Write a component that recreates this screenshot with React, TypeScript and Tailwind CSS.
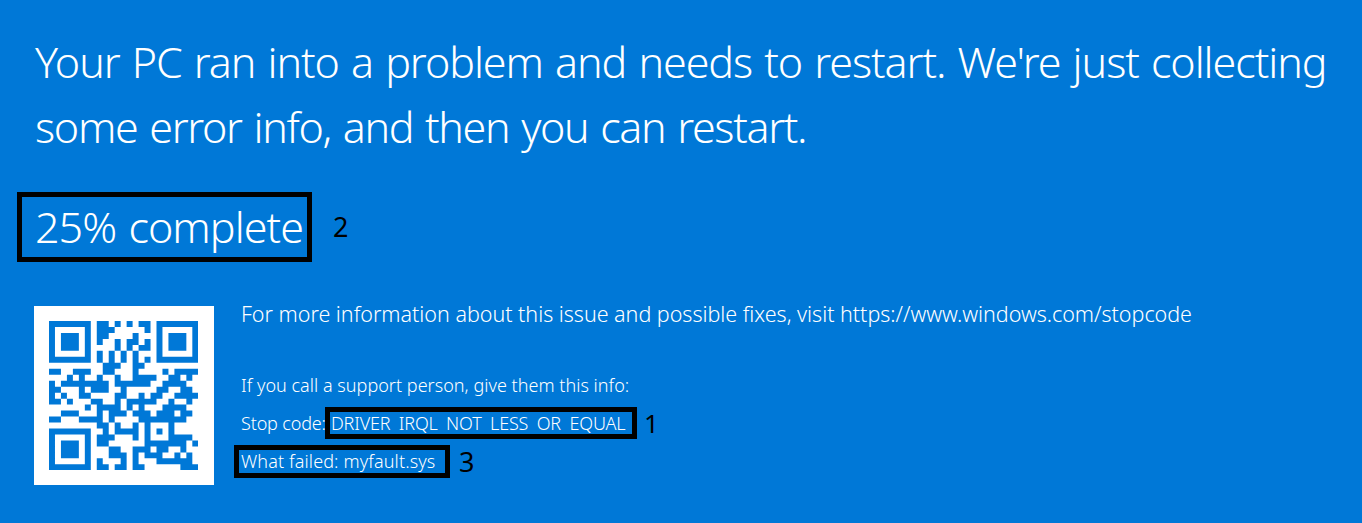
const QR_ROWS = [
  "#######.##.#.#.##.#######",
  "#.....#.###.....#.#.....#",
  "#.###.#.##....#...#.###.#",
  "#.###.#.#..#.##.#.#.###.#",
  "#.###.#....#.#.##.#.###.#",
  "#.....#.#.#.#.#...#.....#",
  "#######.#.#.#.#.#.#######",
  ".........###..##.........",
  "##..###..##...#....#.####",
  "...#.#..#..#..####..##.#.",
  "#.########.######..####..",
  "##...#.###..#.....##..##.",
  "#.#..##....##..#.##..####",
  "##.#...##..#.#####..#..#.",
  "......#.####.#.#...####..",
  "..###...#.###.###.###.##.",
  "##...####.#....########..",
  "........##.#..#.#...#....",
  "#######..#.####.#.#.#....",
  "#.....#.###...#.#...####.",
  "#.###.#.##......#######.#",
  "#.###.#...##..###.##..#..",
  "#.###.#...###.#.###..#.#.",
  "#.....#.#...#.#...######.",
  "#######.##.##.##......###",
];

const QR_PATH = QR_ROWS.flatMap((row, y) =>
  [...row.matchAll(/#+/g)].map((m) => `M${m.index} ${y}h${m[0].length}v1h-${m[0].length}z`),
).join("");

function QrCode() {
  return (
    <div className="mt-[43.7px] h-[179.6px] w-[180px] shrink-0 bg-white pt-[15px] pl-[15px]">
      <svg className="h-[149.3px] w-[149.3px]" viewBox="0 0 25 25" aria-label="QR code">
        <path d={QR_PATH} fill="#0078d7" />
      </svg>
    </div>
  );
}

export default function App() {
  return (
    <main className="flex h-[523px] w-[1362px] flex-col overflow-hidden bg-[#0078d7] font-['Noto_Sans',sans-serif] font-light whitespace-nowrap text-white">
      <h1 className="mt-[29px] ml-[35px] text-[43px] leading-[65px] [word-spacing:2px]">
        <span className="block tracking-[-1.06px]">
          Your PC ran into a problem and needs to restart. We're just collecting
        </span>
        <span className="block tracking-[-1.33px]">some error info, and then you can restart.</span>
      </h1>

      <div className="mt-[33px] ml-[17px] flex h-[70px] items-center">
        <div className="h-[70px] w-[295px] border-5 border-black pl-[13px] text-[43px] leading-[59px] tracking-[-0.95px] [word-spacing:2px]">
          25% complete
        </div>
        <span className="ml-[21px] text-[27px] leading-[66px] font-normal text-black">2</span>
      </div>

      <div className="flex pl-[34px]">
        <QrCode />
        <div className="ml-[20px] flex flex-col">
          <p className="mt-[37px] ml-[7px] h-[30px] text-[21.5px] leading-[30px] tracking-[-0.02px]">
            For more information about this issue and possible fixes, visit
            https://www.windows.com/stopcode
          </p>
          <p className="mt-[41px] ml-[7px] h-[30px] text-[18px] leading-[30px] tracking-[0.03px]">
            If you call a support person, give them this info:
          </p>
          <div className="mt-[7px] flex h-[32px] items-center">
            <span className="ml-[7px] w-[84px] text-[18px] leading-[32px] tracking-[-0.15px]">
              Stop code:
            </span>
            <div className="h-[32px] w-[312px] border-5 border-black pl-[1px] text-[18px] leading-[22px] tracking-[-0.18px] [word-spacing:4px]">
              DRIVER IRQL NOT LESS OR EQUAL
            </div>
            <span className="ml-[7px] text-[26px] leading-[30px] font-normal text-black">1</span>
          </div>
          <div className="mt-[6px] flex h-[33px] items-center">
            <div className="h-[33px] w-[216px] border-5 border-black pl-[2px] text-[18px] leading-[22px] tracking-[0.13px]">
              What failed: myfault.sys
            </div>
            <span className="ml-[9px] text-[27px] leading-[31px] font-normal text-black">3</span>
          </div>
        </div>
      </div>
    </main>
  );
}
